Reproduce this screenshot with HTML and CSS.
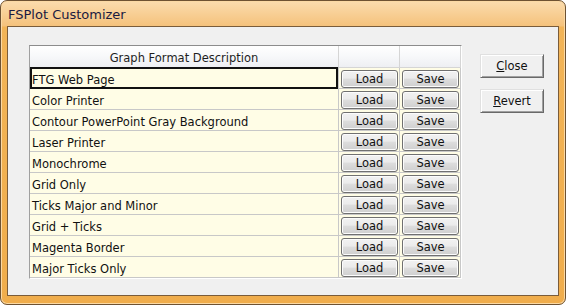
FILE: index.html
```html
<!DOCTYPE html>
<html lang="en">
<head>
    <meta charset="UTF-8">
    <title>FSPlot Customizer</title>
    <link rel="stylesheet" href="styles.css">
</head>
<body>
    <div class="window">
        <div class="titlebar">FSPlot Customizer</div>
        <div class="client">
            <div class="grid-wrap">
                <div class="grid">
                    <div class="head">Graph Format Description</div>
                    <div class="head"></div>
                    <div class="head"></div>

                    <div class="cell desc selected">FTG Web Page</div>
                    <div class="cell"><button class="cell-btn">Load</button></div>
                    <div class="cell"><button class="cell-btn">Save</button></div>

                    <div class="cell desc">Color Printer</div>
                    <div class="cell"><button class="cell-btn">Load</button></div>
                    <div class="cell"><button class="cell-btn">Save</button></div>

                    <div class="cell desc">Contour PowerPoint Gray Background</div>
                    <div class="cell"><button class="cell-btn">Load</button></div>
                    <div class="cell"><button class="cell-btn">Save</button></div>

                    <div class="cell desc">Laser Printer</div>
                    <div class="cell"><button class="cell-btn">Load</button></div>
                    <div class="cell"><button class="cell-btn">Save</button></div>

                    <div class="cell desc">Monochrome</div>
                    <div class="cell"><button class="cell-btn">Load</button></div>
                    <div class="cell"><button class="cell-btn">Save</button></div>

                    <div class="cell desc">Grid Only</div>
                    <div class="cell"><button class="cell-btn">Load</button></div>
                    <div class="cell"><button class="cell-btn">Save</button></div>

                    <div class="cell desc">Ticks Major and Minor</div>
                    <div class="cell"><button class="cell-btn">Load</button></div>
                    <div class="cell"><button class="cell-btn">Save</button></div>

                    <div class="cell desc">Grid + Ticks</div>
                    <div class="cell"><button class="cell-btn">Load</button></div>
                    <div class="cell"><button class="cell-btn">Save</button></div>

                    <div class="cell desc">Magenta Border</div>
                    <div class="cell"><button class="cell-btn">Load</button></div>
                    <div class="cell"><button class="cell-btn">Save</button></div>

                    <div class="cell desc">Major Ticks Only</div>
                    <div class="cell"><button class="cell-btn">Load</button></div>
                    <div class="cell"><button class="cell-btn">Save</button></div>
                </div>
            </div>

            <div class="actions">
                <button class="dlg-btn"><u>C</u>lose</button>
                <button class="dlg-btn"><u>R</u>evert</button>
            </div>
        </div>
    </div>
</body>
</html>
```

FILE: styles.css
```css
body {
    margin: 0;
    font-family: "DejaVu Sans", Verdana, sans-serif;
    font-size: 11px;
    background: #fff;
}
.window {
    width: 566px;
    height: 305px;
    box-sizing: border-box;
    border: 1px solid #6e5232;
    border-radius: 7px;
    background: linear-gradient(#fbdcae, #f5c27c 25px, #f2b457 26px, #f0ad4c);
    box-shadow: inset 0 0 0 1px #fbd9a4;
    display: flex;
    flex-direction: column;
}
.titlebar {
    height: 25px;
    padding-left: 7px;
    line-height: 27px;
    font-size: 13px;
    color: #1a1a40;
}
.client {
    margin: 0 6px 8px 6px;
    flex: 1;
    border: 1px solid #7a5c3a;
    background: #f0f0f0;
    display: flex;
    align-items: flex-start;
    padding: 18px 0 0 21px;
    gap: 18px;
}
.grid-wrap {
    border-top: 1px solid #8c8c8c;
    border-left: 1px solid #a0a0a0;
    border-right: 1px solid #fff;
    border-bottom: 1px solid #fff;
}
.grid {
    display: grid;
    grid-template-columns: 309px 61px 61px;
    grid-template-rows: 22px repeat(10, 21px);
    background: #fffde6;
}
.head {
    box-sizing: border-box;
    padding-top: 3px;
    background: linear-gradient(#ffffff, #f7f8fa 50%, #eeeff3);
    border-right: 1px solid #d5d5d5;
    border-bottom: 1px solid #d5d5d5;
    text-align: center;
    line-height: 18px;
    font-size: 11.5px;
    color: #1e1e1e;
}
.cell {
    box-sizing: border-box;
    border-right: 1px solid #c8c8c8;
    border-bottom: 1px solid #c8c8c8;
    background: #fffde6;
}
.desc {
    padding: 4px 0 0 2px;
    line-height: 16px;
    font-size: 11.5px;
    color: #111;
    white-space: nowrap;
}
.selected {
    box-shadow: inset 0 0 0 2px #111;
    margin-top: -1px;
    padding-top: 5px;
    border-bottom: none;
    height: 22px;
}
.cell-btn {
    width: 57px;
    height: 18px;
    margin: 2px 0 0 2px;
    padding: 0;
    font-family: inherit;
    font-size: 11.5px;
    color: #111;
    border: 1px solid #707070;
    border-radius: 3px;
    background: linear-gradient(#f2f2f2, #ebebeb 45%, #dddddd 50%, #cfcfcf);
    box-shadow: inset 0 0 0 1px #fcfcfc;
}
.actions {
    display: flex;
    flex-direction: column;
    gap: 11px;
    padding-top: 9px;
}
.dlg-btn {
    width: 64px;
    height: 24px;
    padding: 0;
    font-family: inherit;
    font-size: 11.5px;
    color: #111;
    background: #f0f0f0;
    border: 1px solid;
    border-color: #e0e0e0 #696969 #696969 #e0e0e0;
    box-shadow: inset 1px 1px 0 #fff, inset -1px -1px 0 #a0a0a0;
}
```
